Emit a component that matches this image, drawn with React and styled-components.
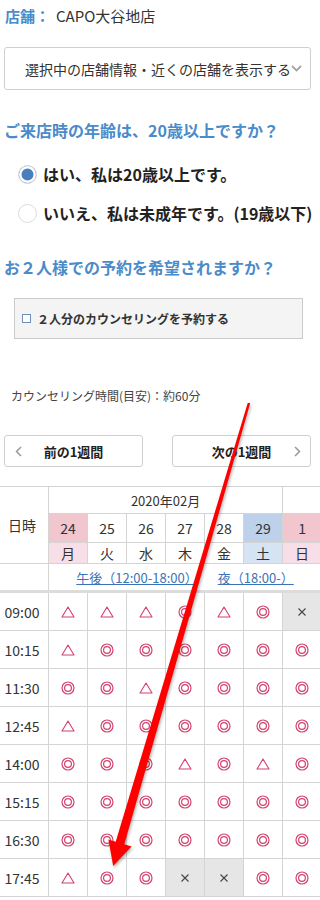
import React from "react";
import styled, { createGlobalStyle } from "styled-components";

const GlobalStyle = createGlobalStyle`
  html, body {
    margin: 0;
    padding: 0;
    background: #fff;
  }
  body {
    width: 320px;
    overflow-x: hidden;
    font-family: "Noto Sans CJK JP", "Noto Sans", sans-serif;
    color: #333;
  }
`;

const Page = styled.div`
  position: relative;
  width: 320px;
  height: 900px;
  overflow: hidden;
`;

const Section = styled.div`
  padding: 0 9px 0 4px;
`;

const StoreLine = styled.div`
  display: flex;
  align-items: center;
  height: 20px;
  margin-top: 5px;
  padding-left: 1px;
  font-size: 15px;
  white-space: nowrap;

  b {
    color: #4a8bc9;
    font-weight: 700;
    margin-right: 6px;
  }
`;

const Dropdown = styled.div`
  display: flex;
  align-items: center;
  justify-content: space-between;
  box-sizing: border-box;
  height: 43px;
  margin-top: 22px;
  padding: 0 8px 0 20px;
  border: 1px solid #cfcfcf;
  border-radius: 3px;
  font-size: 14px;
  white-space: nowrap;
  color: #333;

  svg {
    flex: none;
  }
`;

const Heading = styled.h2`
  margin: ${(p) => p.$top}px 0 0;
  height: 24px;
  line-height: 24px;
  font-size: 16px;
  font-weight: 700;
  color: #4a8bc9;
  white-space: nowrap;
`;

const RadioRow = styled.div`
  display: flex;
  align-items: center;
  gap: 6px;
  height: 24px;
  margin-top: ${(p) => p.$top}px;
  padding-left: 14px;
  font-size: 16px;
  font-weight: 700;
  color: #222;
  white-space: nowrap;
`;

const Radio = styled.span`
  flex: none;
  box-sizing: border-box;
  width: 19px;
  height: 19px;
  border-radius: 50%;
  border: 1px solid #dcdcdc;
  background: ${(p) => (p.$checked ? "#4a7fbf" : "#fff")};
  box-shadow: ${(p) => (p.$checked ? "inset 0 0 0 2.5px #fff" : "none")};
`;

const CheckBox = styled.div`
  display: flex;
  align-items: center;
  gap: 6px;
  box-sizing: border-box;
  height: 41px;
  margin: 19px 8px 0 10px;
  padding-left: 7px;
  background: #f4f4f4;
  border: 1px solid #cbcbcb;
  font-size: 12px;
  font-weight: 700;
  color: #333;
  white-space: nowrap;
`;

const Square = styled.span`
  flex: none;
  box-sizing: border-box;
  width: 9px;
  height: 9px;
  border: 1px solid #6f8fb8;
  background: #fff;
`;

const Duration = styled.div`
  margin-top: 48px;
  padding-left: 11px;
  height: 18px;
  line-height: 18px;
  font-size: 12px;
  color: #444;
  white-space: nowrap;
`;

const WeekNav = styled.div`
  display: grid;
  grid-template-columns: 139px 139px;
  justify-content: space-between;
  margin-top: 30px;
`;

const WeekButton = styled.div`
  position: relative;
  display: flex;
  align-items: center;
  justify-content: center;
  box-sizing: border-box;
  height: 32px;
  border: 1px solid #cfcfcf;
  border-radius: 3px;
  font-size: 13px;
  font-weight: 700;
  color: #222;

  svg {
    position: absolute;
    top: 10px;
    ${(p) => (p.$side === "left" ? "left: 10px;" : "right: 9px;")}
  }
`;

const TableWrap = styled.div`
  margin-top: 19px;
  width: 320px;
  overflow: hidden;
`;

const Table = styled.table`
  margin-left: -5px;
  border-collapse: collapse;
  table-layout: fixed;
  width: 326px;
  font-size: 14px;
  color: #333;

  td,
  th {
    border: 1px solid #d4d4d4;
    padding: 0;
    text-align: center;
    font-weight: 400;
  }
`;

const MonthCell = styled.th`
  height: 26px;
  font-size: 13px;
`;

const DateCell = styled.td`
  height: 28px;
  background: ${(p) => p.$bg};
`;

const DayCell = styled.td`
  height: 18px;
  background: ${(p) => p.$bg};
`;

const LinkCell = styled.td`
  height: 26px;
  border-bottom: 3px solid #dcdcdc !important;
  white-space: nowrap;
  font-size: 13px;

  a {
    color: #3b74b8;
    text-decoration: underline;
    margin: 0 10px;
  }
`;

const TimeCell = styled.td`
  height: 37px;
  font-size: 14px;
`;

const SlotCell = styled.td`
  height: 37px;
  background: ${(p) => (p.$full ? "#e6e6e6" : "#fff")};

  svg {
    display: block;
    margin: 0 auto;
  }
`;

const Overlay = styled.svg`
  position: absolute;
  top: 0;
  left: 0;
  pointer-events: none;
  filter: drop-shadow(1px 2px 1.5px rgba(0, 0, 0, 0.3));
`;

const days = [
  { d: "24", w: "月", bg: "#f2c6cf", wbg: "#f7dee7" },
  { d: "25", w: "火" },
  { d: "26", w: "水" },
  { d: "27", w: "木" },
  { d: "28", w: "金" },
  { d: "29", w: "土", bg: "#bdd1ea", wbg: "#d5e3f3" },
  { d: "1", w: "日", bg: "#f2c6cf", wbg: "#f7dee7" },
];

// o = 空きあり, t = 残りわずか, x = 満席
const slots = [
  ["09:00", "tttotox"],
  ["10:15", "toooooo"],
  ["11:30", "ootoooo"],
  ["12:45", "toooooo"],
  ["14:00", "ooototo"],
  ["15:15", "ooooooo"],
  ["16:30", "ooooooo"],
  ["17:45", "tooxxoo"],
];

const Mark = ({ type }) => {
  if (type === "o")
    return (
      <svg width="14" height="14" viewBox="0 0 14 14">
        <circle cx="7" cy="7" r="6" fill="none" stroke="#d2436e" strokeWidth="1.2" />
        <circle cx="7" cy="7" r="3.4" fill="none" stroke="#d2436e" strokeWidth="1.2" />
      </svg>
    );
  if (type === "t")
    return (
      <svg width="14" height="12" viewBox="0 0 14 12">
        <path d="M7 1 L13 11 L1 11 Z" fill="none" stroke="#d2436e" strokeWidth="1.1" strokeLinejoin="round" />
      </svg>
    );
  return (
    <svg width="10" height="10" viewBox="0 0 10 10">
      <path d="M1.5 1.5 L8.5 8.5 M8.5 1.5 L1.5 8.5" stroke="#444" strokeWidth="1.1" />
    </svg>
  );
};

const Chevron = ({ dir }) => (
  <svg width="7" height="11" viewBox="0 0 7 11">
    <path
      d={dir === "left" ? "M6 1 L1.5 5.5 L6 10" : "M1 1 L5.5 5.5 L1 10"}
      fill="none"
      stroke="#999"
      strokeWidth="1.5"
    />
  </svg>
);

export default function App() {
  return (
    <Page>
      <GlobalStyle />
      <Section>
        <StoreLine>
          <b>店舗：</b>CAPO大谷地店
        </StoreLine>
        <Dropdown>
          選択中の店舗情報・近くの店舗を表示する
          <svg width="11" height="7" viewBox="0 0 11 7">
            <path d="M1 1 L5.5 5.5 L10 1" fill="none" stroke="#a5a5a5" strokeWidth="1.8" />
          </svg>
        </Dropdown>
        <Heading $top={28}>ご来店時の年齢は、20歳以上ですか？</Heading>
        <RadioRow $top={20}>
          <Radio $checked />
          はい、私は20歳以上です。
        </RadioRow>
        <RadioRow $top={15}>
          <Radio />
          いいえ、私は未成年です。(19歳以下)
        </RadioRow>
        <Heading $top={30}>お２人様での予約を希望されますか？</Heading>
        <CheckBox>
          <Square />２人分のカウンセリングを予約する
        </CheckBox>
      </Section>
      <Duration>カウンセリング時間(目安)：約60分</Duration>
      <Section>
        <WeekNav>
          <WeekButton $side="left">
            <Chevron dir="left" />
            前の1週間
          </WeekButton>
          <WeekButton $side="right">
            次の1週間
            <Chevron dir="right" />
          </WeekButton>
        </WeekNav>
      </Section>
      <TableWrap>
        <Table>
          <colgroup>
            <col style={{ width: 53 }} />
            {days.map((d) => (
              <col key={d.d} style={{ width: 39 }} />
            ))}
          </colgroup>
          <thead>
            <tr>
              <th rowSpan={3}>日時</th>
              <MonthCell colSpan={6}>2020年02月</MonthCell>
              <MonthCell />
            </tr>
            <tr>
              {days.map((d) => (
                <DateCell key={d.d} $bg={d.bg || "#fff"}>
                  {d.d}
                </DateCell>
              ))}
            </tr>
            <tr>
              {days.map((d) => (
                <DayCell key={d.w} $bg={d.wbg || "#fff"}>
                  {d.w}
                </DayCell>
              ))}
            </tr>
            <tr>
              <LinkCell />
              <LinkCell colSpan={7}>
                <a>午後（12:00-18:00）</a>
                <a>夜（18:00-）</a>
              </LinkCell>
            </tr>
          </thead>
          <tbody>
            {slots.map(([time, marks]) => (
              <tr key={time}>
                <TimeCell>{time}</TimeCell>
                {marks.split("").map((m, i) => (
                  <SlotCell key={i} $full={m === "x"}>
                    <Mark type={m} />
                  </SlotCell>
                ))}
              </tr>
            ))}
          </tbody>
        </Table>
      </TableWrap>
      <Overlay width="320" height="900" viewBox="0 0 320 900">
        <polygon
          points="247.8,402.7 250.2,403.3 124.3,844.3 131.6,846.4 113.2,866 108.4,839.6 115.7,841.7"
          fill="#ff0000"
        />
      </Overlay>
    </Page>
  );
}
